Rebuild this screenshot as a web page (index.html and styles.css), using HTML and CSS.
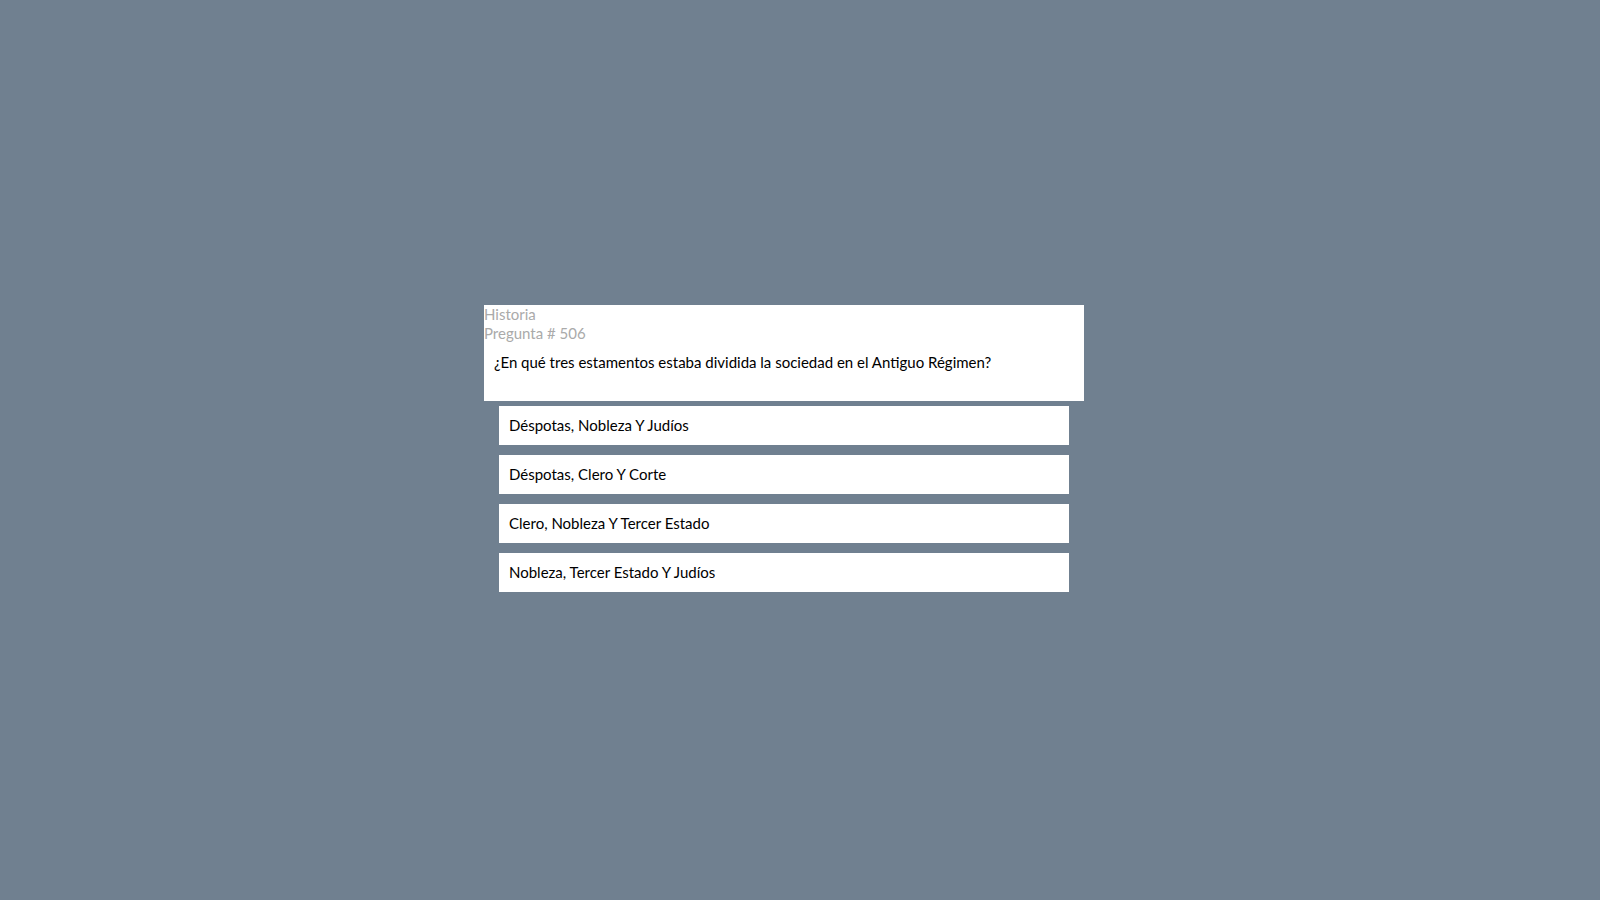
FILE: index.html
```html
<!DOCTYPE html>
<html lang="es">
<head>
<meta charset="utf-8">
<title>Pregunta</title>
<link rel="stylesheet" href="styles.css">
</head>
<body>
<main class="stage">
  <section class="quiz">
    <div class="card">
      <div class="meta">Historia</div>
      <div class="meta">Pregunta # 506</div>
      <p class="question">¿En qué tres estamentos estaba dividida la sociedad en el Antiguo Régimen?</p>
    </div>
    <ul class="answers">
      <li class="answer">Déspotas, Nobleza Y Judíos</li>
      <li class="answer">Déspotas, Clero Y Corte</li>
      <li class="answer">Clero, Nobleza Y Tercer Estado</li>
      <li class="answer">Nobleza, Tercer Estado Y Judíos</li>
    </ul>
  </section>
</main>
</body>
</html>
```
FILE: styles.css
```css
html, body {
  margin: 0;
  padding: 0;
  height: 100%;
}
body {
  background: #708090;
  font-family: Lato, "Open Sans", "Liberation Sans", sans-serif;
  font-size: 15px;
  color: #000;
}
.stage {
  height: 100%;
  display: flex;
  align-items: center;
  justify-content: center;
  padding: 0 32px 4px 0;
  box-sizing: border-box;
}
.quiz {
  width: 600px;
  display: flex;
  flex-direction: column;
  align-items: center;
}
.card {
  width: 600px;
  height: 96px;
  background: #fff;
  box-sizing: border-box;
}
.meta {
  color: #aaaaaa;
  line-height: 19px;
}
.question {
  margin: 9px 0 0;
  padding: 0 10px;
  line-height: 20px;
}
.answers {
  list-style: none;
  margin: 5px 0 0;
  padding: 0;
  width: 570px;
  display: flex;
  flex-direction: column;
  gap: 10px;
}
.answer {
  background: #fff;
  height: 39px;
  padding: 0 10px;
  display: flex;
  align-items: center;
  box-sizing: border-box;
}
```
